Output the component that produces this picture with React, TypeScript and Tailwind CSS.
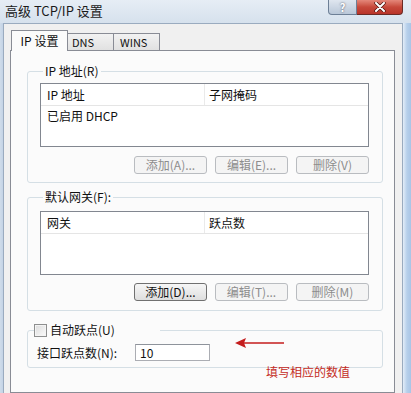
import React from 'react';

const font = { fontFamily: '"Noto Sans CJK SC", "Noto Sans", sans-serif' };

const Btn: React.FC<{ label: string; disabled?: boolean }> = ({ label, disabled }) => (
  <div
    className={
      disabled
        ? 'w-[73px] h-[18px] flex items-center justify-center rounded-[3px] border border-[#b9bcc0] bg-[#f4f4f4] text-[#8d8d8d] text-[12px] leading-none'
        : 'w-[73px] h-[18px] flex items-center justify-center rounded-[3px] border border-[#707070] bg-gradient-to-b from-[#f6f6f6] to-[#dedede] text-[#111] text-[12px] leading-none'
    }
  >
    {label}
  </div>
);

const ListBox: React.FC<{ col1: string; col2: string; rows?: string[] }> = ({ col1, col2, rows = [] }) => (
  <div className="w-[329px] h-[64px] border border-[#828790] bg-white">
    <div className="h-[22px] flex border-b border-[#e5e5e5] text-[12px] text-[#111]">
      <div className="w-[164px] pl-[6px] flex items-center border-r border-[#eaeaea]">{col1}</div>
      <div className="pl-[4px] flex items-center">{col2}</div>
    </div>
    {rows.map((r) => (
      <div key={r} className="h-[20px] pl-[6px] flex items-center text-[12px] text-[#111]">
        {r}
      </div>
    ))}
  </div>
);

const App: React.FC = () => {
  return (
    <div className="w-[411px] h-[393px] overflow-hidden bg-[#d9e4f0] flex flex-col" style={font}>
      {/* title bar */}
      <div className="h-[23px] flex items-start bg-gradient-to-b from-[#e6edf5] to-[#d6e1ed]">
        <div className="pl-[5px] pt-[3px] text-[13px] leading-[16px] text-[#1a1a1a]">高级 TCP/IP 设置</div>
        <div className="ml-auto mr-[8px] flex">
          <div className="w-[29px] h-[15px] flex items-center justify-center rounded-bl-[4px] border border-t-0 border-[#6d7f96] bg-gradient-to-b from-[#dfe6ef] to-[#b9c7d8] text-[11px] leading-none font-bold text-white [text-shadow:0_0_2px_#445]">
            ?
          </div>
          <div className="w-[46px] h-[15px] flex items-center justify-center rounded-br-[4px] border border-l-0 border-t-0 border-[#6b2a25] bg-gradient-to-b from-[#e4877a] via-[#c7493b] to-[#b8342a]">
            <svg width="12" height="10" viewBox="0 0 12 10">
              <path d="M2 1 L10 9 M10 1 L2 9" stroke="#4a1410" strokeWidth="3.4" strokeLinecap="round" />
              <path d="M2 1 L10 9 M10 1 L2 9" stroke="#ffffff" strokeWidth="2" strokeLinecap="round" />
            </svg>
          </div>
        </div>
      </div>

      {/* body */}
      <div className="flex flex-1">
        <div className="w-[3px] bg-gradient-to-r from-[#cfdcea] to-[#c3d3e6]" />
        <div className="w-[400px] border-l border-t border-r border-[#9aabbf] bg-[#f0f0f0] pl-[6px] pt-[6px] flex flex-col">
          {/* tabs */}
          <div className="relative z-10 h-[21px] -mb-px flex items-end text-[12px] text-[#111]">
            <div className="ml-px w-[57px] h-[21px] border border-b-0 border-[#898c95] bg-[#fbfbfb] flex items-center justify-center">
              IP 设置
            </div>
            <div className="w-[46px] h-[18px] border border-l-0 border-[#898c95] bg-gradient-to-b from-[#f2f2f2] to-[#e1e1e1] flex items-center pl-[4px] text-[11px]">
              DNS
            </div>
            <div className="w-[46px] h-[18px] border border-l-0 border-[#898c95] bg-gradient-to-b from-[#f2f2f2] to-[#e1e1e1] flex items-center pl-[6px] text-[11px]">
              WINS
            </div>
          </div>

          {/* tab page */}
          <div className="w-[385px] flex-1 border border-[#898c95] bg-[#fbfbfb] pl-[16px] pt-[12px] text-[12px] text-[#111]">
            <fieldset className="w-[356px] rounded-[3px] border border-[#d5dfe5] px-[12px] pb-[8px]">
              <legend className="ml-[3px] px-[2px] leading-[16px]">IP 地址(R)</legend>
              <div className="mt-[4px]">
                <ListBox col1="IP 地址" col2="子网掩码" rows={['已启用 DHCP']} />
              </div>
              <div className="mt-[9px] w-[329px] flex justify-end gap-[8px]">
                <Btn label="添加(A)..." disabled />
                <Btn label="编辑(E)..." disabled />
                <Btn label="删除(V)" disabled />
              </div>
            </fieldset>

            <fieldset className="mt-[6px] w-[356px] rounded-[3px] border border-[#d5dfe5] px-[12px] pb-[9px]">
              <legend className="ml-[3px] px-[2px] leading-[16px]">默认网关(F):</legend>
              <div className="mt-[6px]">
                <ListBox col1="网关" col2="跃点数" />
              </div>
              <div className="mt-[8px] w-[329px] flex justify-end gap-[8px]">
                <Btn label="添加(D)..." />
                <Btn label="编辑(T)..." disabled />
                <Btn label="删除(M)" disabled />
              </div>
            </fieldset>

            <fieldset className="relative mt-[11px] w-[356px] rounded-[3px] border border-[#d5dfe5] pb-[6px]">
              <legend className="ml-[6px] w-[126px] h-[16px] flex items-center gap-[3px]">
                <span className="w-[13px] h-[13px] border border-[#8e8f8f] bg-gradient-to-br from-[#dcdcdc] to-[#fbfbfb] shadow-[inset_0_0_0_1px_#f4f4f4]" />
                <span className="leading-[16px]">自动跃点(U)</span>
              </legend>
              <div className="mt-[6px] pl-[9px] flex items-center">
                <span className="w-[98px] leading-[16px]">接口跃点数(N):</span>
                <div className="w-[75px] h-[17px] border border-[#abadb3] border-t-[#8e939b] bg-white pl-[4px] flex items-center text-[12px] leading-none">
                  10
                </div>
              </div>

              {/* annotation */}
              <svg className="absolute left-[207px] top-[-1px]" width="50" height="12" viewBox="0 0 50 12">
                <path d="M9 6 L49 6" stroke="#c41d1d" strokeWidth="1.3" />
                <path d="M0 6 L11 1 L9 6 L11 11 Z" fill="#c41d1d" />
              </svg>
              <span className="absolute left-[238px] top-[27px] text-[12px] leading-[14px] text-[#c42b24] whitespace-nowrap">
                填写相应的数值
              </span>
            </fieldset>
          </div>
        </div>
        <div className="w-[8px] bg-gradient-to-r from-[#e3edf8] via-[#b6cfea] to-[#a9c5e6]" />
      </div>
    </div>
  );
};

export default App;
